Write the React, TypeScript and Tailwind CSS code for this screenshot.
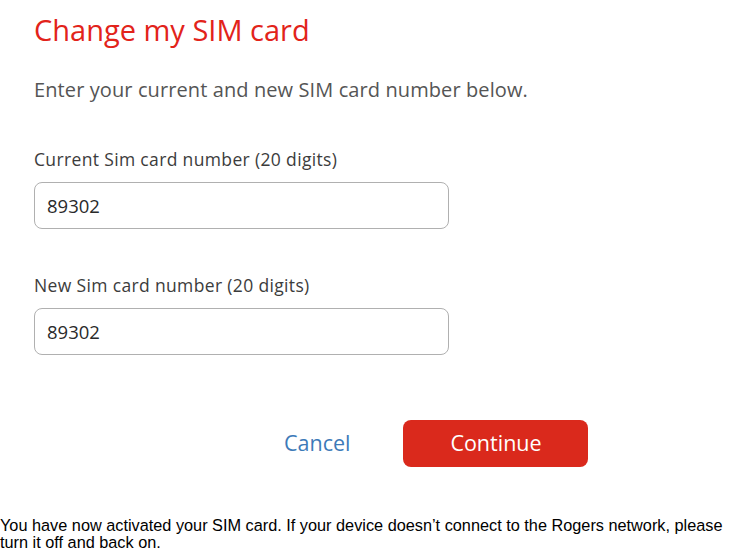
export default function App() {
  return (
    <div className="w-[748px] h-[555px] bg-white flex flex-col overflow-hidden">
      <div className="pl-[34px] pt-[10px] font-['Open_Sans',sans-serif]">
        <h1 className="text-[29px] leading-[40px] text-[#e2231a]">Change my SIM card</h1>
        <p className="mt-[27px] text-[20px] leading-[26px] tracking-[0.1px] text-[#555555]">
          Enter your current and new SIM card number below.
        </p>

        <label className="block mt-[45px] text-[17.5px] leading-[22px] tracking-[0.35px] text-[#3c3c3c]">
          Current Sim card number (20 digits)
        </label>
        <div className="mt-[12px] w-[415px] h-[47px] rounded-[8px] border border-[#b0b0b0] flex items-center px-[12px] text-[18.5px] text-[#2a2a2a]">
          89302
        </div>

        <label className="block mt-[45px] text-[17.5px] leading-[22px] tracking-[0.35px] text-[#3c3c3c]">
          New Sim card number (20 digits)
        </label>
        <div className="mt-[12px] w-[415px] h-[47px] rounded-[8px] border border-[#b0b0b0] flex items-center px-[12px] text-[18.5px] text-[#2a2a2a]">
          89302
        </div>

        <div className="mt-[65px] flex items-center">
          <button className="ml-[250px] text-[21.5px] text-[#3d7ab8]">Cancel</button>
          <button className="ml-[53px] w-[185px] h-[47px] rounded-[8px] bg-[#da291c] text-white text-[21.5px]">
            Continue
          </button>
        </div>
      </div>

      <p className="mt-[50px] font-['Liberation_Sans',Arial,sans-serif] text-[16.3px] leading-[17px] text-black">
        You have now activated your SIM card. If your device doesn’t connect to the Rogers network, please
        turn it off and back on.
      </p>
    </div>
  );
}
